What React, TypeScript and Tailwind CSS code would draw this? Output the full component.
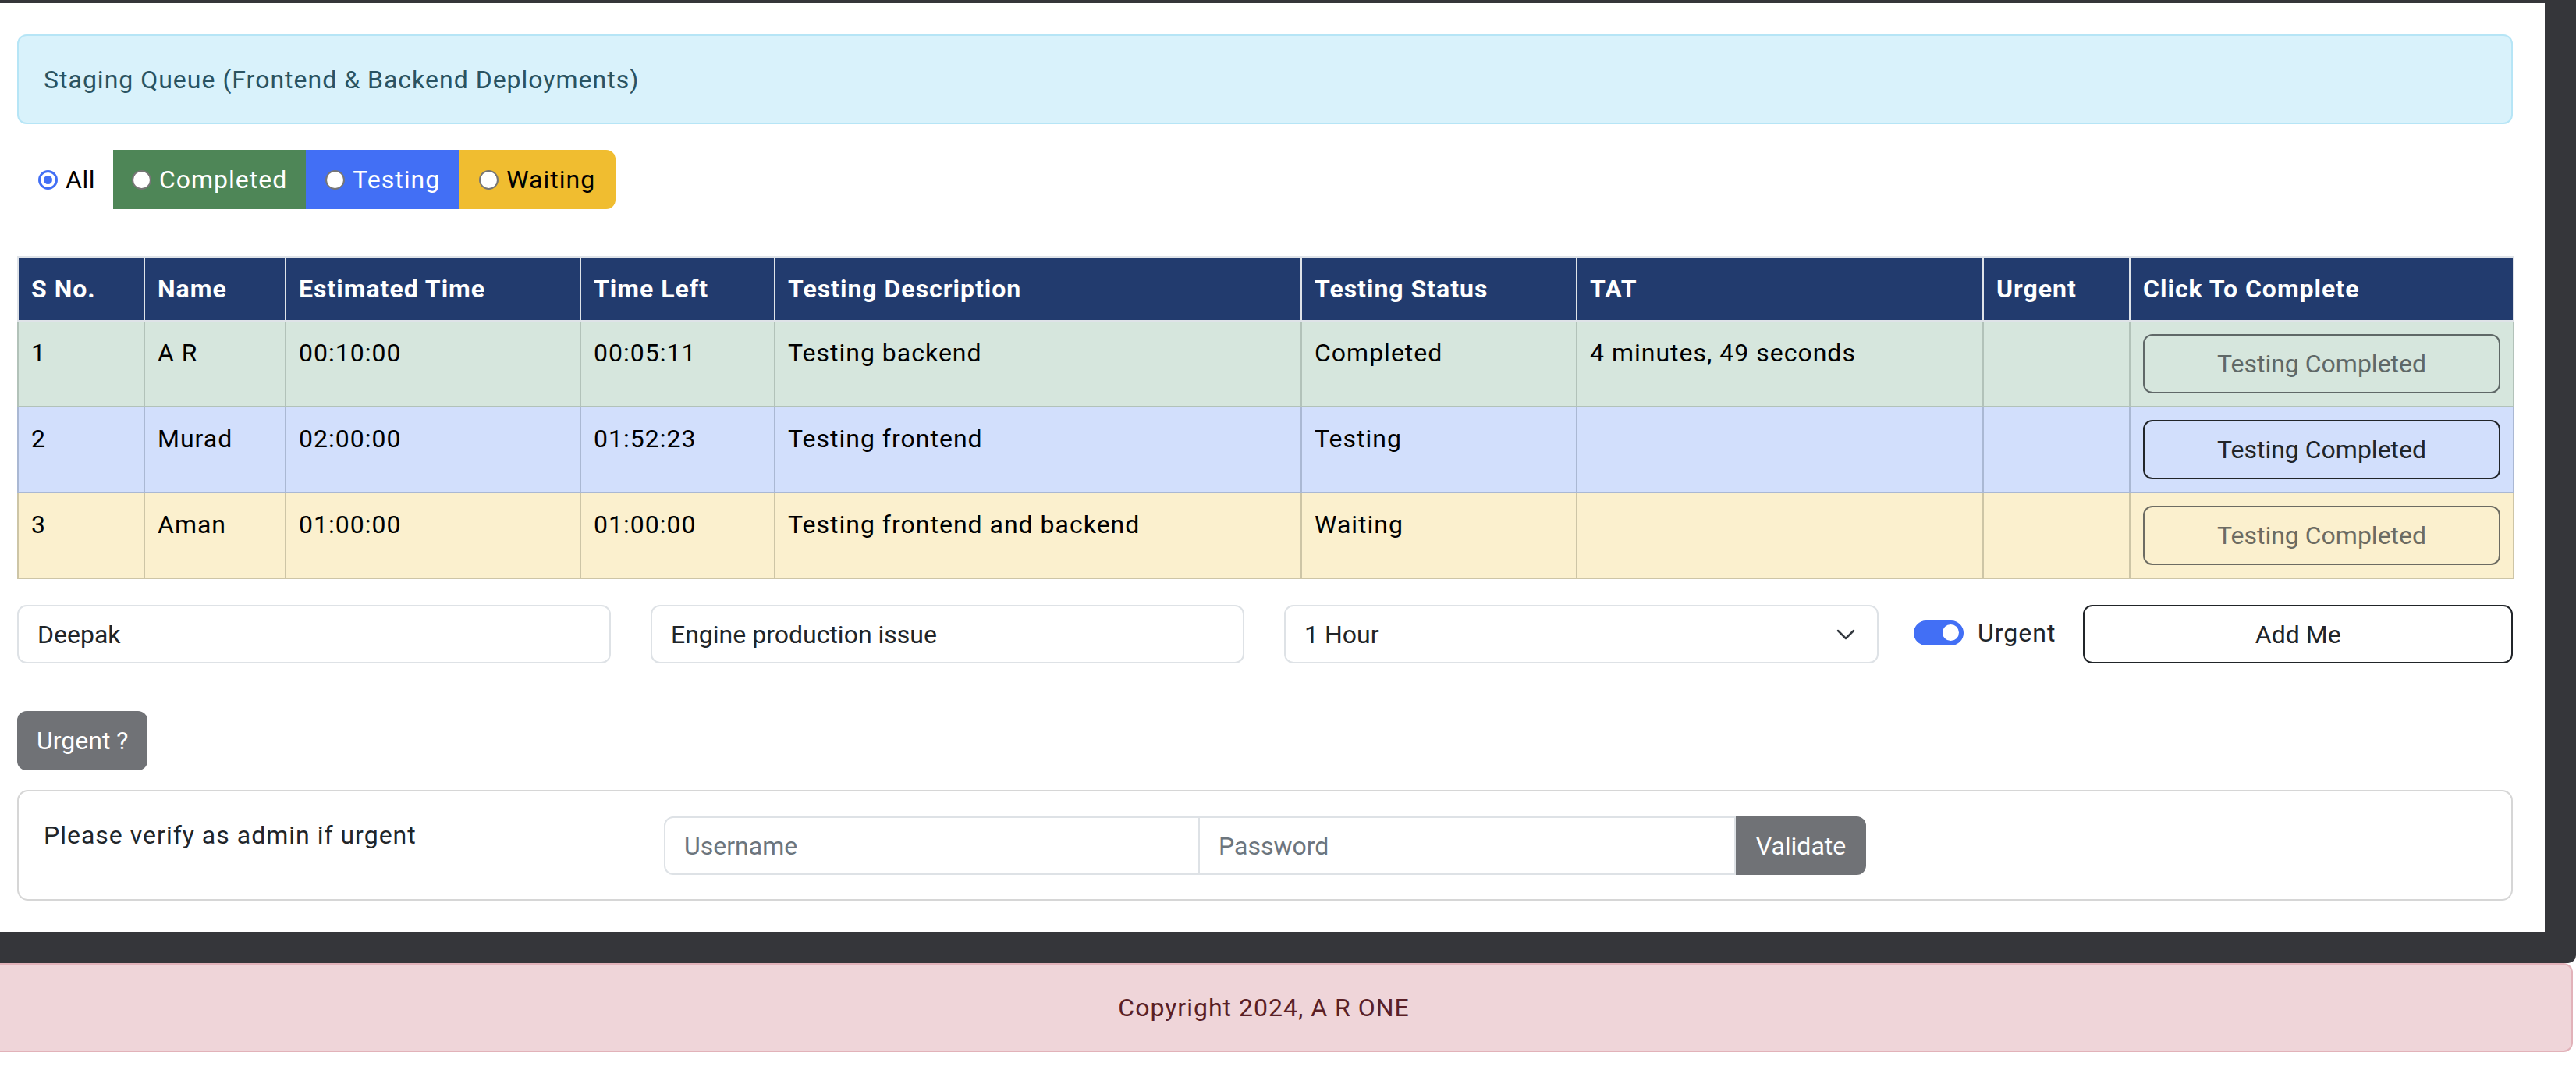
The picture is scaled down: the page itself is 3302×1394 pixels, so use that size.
import React from "react";

const rows = [
  {
    n: "1",
    name: "A R",
    est: "00:10:00",
    left: "00:05:11",
    desc: "Testing backend",
    status: "Completed",
    tat: "4 minutes, 49 seconds",
    bg: "bg-[#d6e6dd]",
    bd: "border-[#b2c2b9]",
    disabled: true,
  },
  {
    n: "2",
    name: "Murad",
    est: "02:00:00",
    left: "01:52:23",
    desc: "Testing frontend",
    status: "Testing",
    tat: "",
    bg: "bg-[#d2dffc]",
    bd: "border-[#aab8d3]",
    disabled: false,
  },
  {
    n: "3",
    name: "Aman",
    est: "01:00:00",
    left: "01:00:00",
    desc: "Testing frontend and backend",
    status: "Waiting",
    tat: "",
    bg: "bg-[#fbf0ce]",
    bd: "border-[#cdc5a6]",
    disabled: true,
  },
];

const headers = [
  "S No.",
  "Name",
  "Estimated Time",
  "Time Left",
  "Testing Description",
  "Testing Status",
  "TAT",
  "Urgent",
  "Click To Complete",
];

function RadioDot() {
  return (
    <span className="inline-block w-[25px] h-[25px] rounded-full bg-white border-2 border-[#767676] shrink-0" />
  );
}

export default function App() {
  return (
    <div className="min-h-screen bg-white font-['Roboto',_'Liberation_Sans',_sans-serif] text-[32px] leading-[48px] tracking-[1px] text-[#212529]">
      <div className="bg-[#35363a] pt-[4px] pr-[40px] pb-[40px] rounded-br-[10px]">
        <div className="bg-white pl-[22px] pr-[41px] pt-[40px] pb-[40px]">
          {/* Alert */}
          <div className="h-[115px] flex items-center border-2 border-[#b6e5f6] bg-[#d9f2fb] rounded-[12px] px-[32px] text-[#2a5361]">
            Staging Queue (Frontend &amp; Backend Deployments)
          </div>

          {/* Radio filter */}
          <div className="mt-[33px] flex items-stretch h-[76px]">
            <div className="flex items-center ml-[27px] mr-[23px]">
              <span className="w-[25px] h-[25px] rounded-full border-[3px] border-[#426ff5] bg-white flex items-center justify-center shrink-0">
                <span className="w-[11px] h-[11px] rounded-full bg-[#426ff5]" />
              </span>
              <span className="ml-[10px] text-black tracking-[0.5px]">All</span>
            </div>
            <div className="flex items-center gap-[10px] px-[24px] bg-[#4e8657] text-white">
              <RadioDot />
              <span>Completed</span>
            </div>
            <div className="flex items-center gap-[10px] px-[25px] bg-[#426ff5] text-white">
              <RadioDot />
              <span>Testing</span>
            </div>
            <div className="flex items-center gap-[10px] pl-[25px] pr-[26px] bg-[#f0bd30] text-black rounded-r-[12px]">
              <RadioDot />
              <span>Waiting</span>
            </div>
          </div>

          {/* Table */}
          <table className="mt-[60px] w-full table-fixed border-collapse">
            <colgroup>
              <col className="w-[162px]" />
              <col className="w-[181px]" />
              <col className="w-[378px]" />
              <col className="w-[249px]" />
              <col className="w-[675px]" />
              <col className="w-[353px]" />
              <col className="w-[521px]" />
              <col className="w-[188px]" />
              <col className="w-[492px]" />
            </colgroup>
            <thead>
              <tr>
                {headers.map((h) => (
                  <th
                    key={h}
                    className="bg-[#223b6e] text-white font-bold text-left px-[16px] py-[16px] border-2 border-[#dfe3e8] whitespace-nowrap"
                  >
                    {h}
                  </th>
                ))}
              </tr>
            </thead>
            <tbody>
              {rows.map((r) => {
                const td = `${r.bg} ${r.bd} border-2 px-[16px] py-[16px] align-top text-black whitespace-nowrap`;
                return (
                  <tr key={r.n}>
                    <td className={td}>{r.n}</td>
                    <td className={td}>{r.name}</td>
                    <td className={td}>{r.est}</td>
                    <td className={td}>{r.left}</td>
                    <td className={td}>{r.desc}</td>
                    <td className={td}>{r.status}</td>
                    <td className={td}>{r.tat}</td>
                    <td className={td}></td>
                    <td className={td}>
                      <button
                        className={`w-full block border-2 border-[#212529] rounded-[12px] py-[12px] leading-[48px] tracking-normal text-[#212529] text-center ${
                          r.disabled ? "opacity-[0.65]" : ""
                        }`}
                      >
                        Testing Completed
                      </button>
                    </td>
                  </tr>
                );
              })}
            </tbody>
          </table>

          {/* Form row */}
          <div className="mt-[33px] flex items-center h-[75px]">
            <input
              defaultValue="Deepak"
              className="w-[761px] h-[75px] border-2 border-[#dee2e6] rounded-[12px] px-[24px] leading-[48px] tracking-normal text-[#212529] outline-none"
            />
            <input
              defaultValue="Engine production issue"
              className="ml-[51px] w-[761px] h-[75px] border-2 border-[#dee2e6] rounded-[12px] px-[24px] leading-[48px] tracking-normal text-[#212529] outline-none"
            />
            <div className="ml-[51px] w-[762px] h-[75px] border-2 border-[#dee2e6] rounded-[12px] pl-[24px] pr-[28px] flex items-center justify-between tracking-normal">
              <span>1 Hour</span>
              <svg width="24" height="14" viewBox="0 0 24 14" fill="none">
                <path d="M2 2 L12 12 L22 2" stroke="#343a40" strokeWidth="2.5" strokeLinecap="round" strokeLinejoin="round" />
              </svg>
            </div>
            <div className="ml-[45px] flex items-center -mt-[4px]">
              <span className="w-[64px] h-[32px] rounded-full bg-[#426ff5] flex items-center justify-end pr-[6px] shrink-0">
                <span className="w-[21px] h-[21px] rounded-full bg-white" />
              </span>
              <span className="ml-[18px]">Urgent</span>
            </div>
            <button className="ml-[35px] flex-1 h-[75px] border-2 border-[#212529] rounded-[12px] leading-[48px] tracking-normal text-[#212529] text-center">
              Add Me
            </button>
          </div>

          {/* Urgent button */}
          <button className="mt-[61px] block h-[76px] bg-[#707276] text-white rounded-[12px] px-[25px] leading-[48px] tracking-normal">
            Urgent ?
          </button>

          {/* Admin card */}
          <div className="mt-[25px] h-[142px] border-2 border-[#d6d6d6] rounded-[14px] px-[32px] pt-[32px] flex items-start">
            <div className="w-[795px] shrink-0">Please verify as admin if urgent</div>
            <div className="flex w-[1541px] h-[75px]">
              <input
                placeholder="Username"
                className="w-[687px] h-[75px] border-2 border-[#dee2e6] rounded-l-[12px] px-[24px] leading-[48px] tracking-normal placeholder:text-[#6c757d] outline-none"
              />
              <input
                placeholder="Password"
                className="w-[687px] h-[75px] border-2 border-l-0 border-[#dee2e6] px-[24px] leading-[48px] tracking-normal placeholder:text-[#6c757d] outline-none"
              />
              <button className="w-[167px] h-[75px] bg-[#707276] text-white rounded-r-[12px] leading-[48px] tracking-normal text-center">
                Validate
              </button>
            </div>
          </div>
        </div>
      </div>

      {/* Footer */}
      <div className="mr-[4px] h-[114px] flex items-center justify-center border-y-2 border-r-2 border-[#e2b2b9] bg-[#efd5d9] rounded-r-[12px] pr-[56px] text-[#5a1f26]">
        Copyright 2024, A R ONE
      </div>
    </div>
  );
}
